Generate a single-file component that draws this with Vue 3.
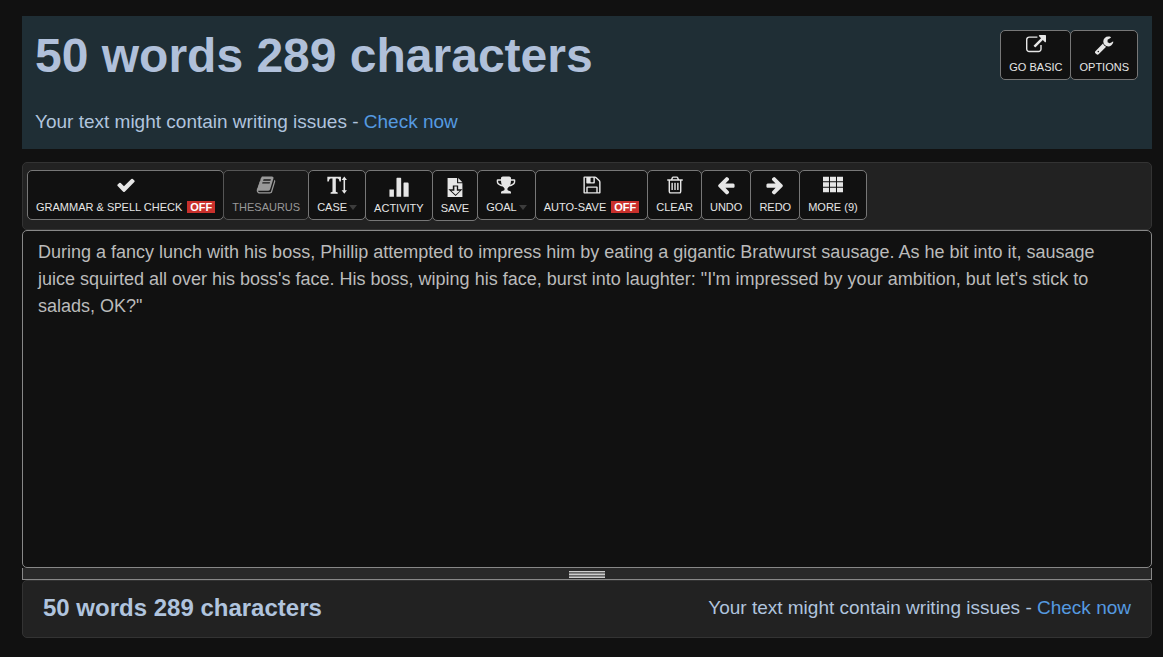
<script setup>
import { ref } from 'vue'

const text = ref(
  'During a fancy lunch with his boss, Phillip attempted to impress him by eating a gigantic Bratwurst sausage. As he bit into it, sausage juice squirted all over his boss\'s face. His boss, wiping his face, burst into laughter: "I\'m impressed by your ambition, but let\'s stick to salads, OK?"'
)

const icons = {
  external: 'M1408 928v320q0 119-84.5 203.5t-203.5 84.5h-832q-119 0-203.5-84.5t-84.5-203.5v-832q0-119 84.5-203.5t203.5-84.5h704q14 0 23 9t9 23v64q0 14-9 23t-23 9h-704q-66 0-113 47t-47 113v832q0 66 47 113t113 47h832q66 0 113-47t47-113v-320q0-14 9-23t23-9h64q14 0 23 9t9 23zm384-864v512q0 26-19 45t-45 19-45-19l-176-176-652 652q-10 10-23 10t-23-10l-114-114q-10-10-10-23t10-23l652-652-176-176q-19-19-19-45t19-45 45-19h512q26 0 45 19t19 45z',
  wrench: 'M448 1472q0-26-19-45t-45-19-45 19-19 45 19 45 45 19 45-19 19-45zm644-420l-682 682q-37 37-90 37-52 0-91-37l-106-108q-38-36-38-90 0-53 38-91l681-681q39 98 114.5 173.5t173.5 114.5zm634-435q0 39-23 106-47 134-164.5 217.5t-258.5 83.5q-185 0-316.5-131.5t-131.5-316.5 131.5-316.5 316.5-131.5q58 0 121.5 16.5t107.5 46.5q16 11 16 28t-16 28l-293 169v224l193 107q5-3 79-48.5t135.5-81 70.5-35.5q15 0 23.5 10t8.5 25z',
  check: 'M1671 566q0 40-28 68l-724 724-136 136q-28 28-68 28t-68-28l-136-136-362-362q-28-28-28-68t28-68l136-136q28-28 68-28t68 28l294 295 656-657q28-28 68-28t68 28l136 136q28 28 28 68z',
  book: 'M1703 478q40 57 18 129l-275 906q-19 64-76.5 107.5t-122.5 43.5h-923q-77 0-148.5-53.5t-99.5-131.5q-24-67-2-127 0-4 3-27t4-37q1-8-3-21.5t-3-19.5q2-11 8-21t16.5-23.5 16.5-23.5q23-38 45-91.5t30-91.5q3-10 .5-30t-.5-28q3-11 17-28t17-23q21-36 42-92t25-90q1-9-2.5-32t.5-28q4-13 22-30.5t22-22.5q19-26 42.5-84.5t27.5-96.5q1-8-3-25.5t-2-26.5q2-8 9-18t18-23 17-21q8-12 16.5-30.5t15-35 16-36 19.5-32 26.5-23.5 36-11.5 47.5 5.5l-1 3q38-9 51-9h761q74 0 114 56t18 130l-274 906q-36 119-71.5 153.5t-128.5 34.5h-869q-27 0-38 15-11 16-1 43 24 70 144 70h923q29 0 56-15.5t35-41.5l300-987q7-22 5-57 38 15 59 43zm-1064 2q-4 13 2 22.5t20 9.5h608q13 0 25.5-9.5t16.5-22.5l21-64q4-13-2-22.5t-20-9.5h-608q-13 0-25.5 9.5t-16.5 22.5zm-83 256q-4 13 2 22.5t20 9.5h608q13 0 25.5-9.5t16.5-22.5l21-64q4-13-2-22.5t-20-9.5h-608q-13 0-25.5 9.5t-16.5 22.5z',
  // Serif capital with a vertical double arrow
  textHeight: 'M30 150H1250V580H1120Q1090 330 960 310H790V1510L960 1560V1680H320V1560L490 1510V310H330Q200 330 160 580H30ZM1550 130L1790 450H1620V1370H1790L1550 1690L1310 1370H1480V450H1310Z',
  chart: 'M40 1130h400v650h-400zM670 130q0-60 60-60h300q60 0 60 60v1650h-420zM1300 560q0-60 60-60h300q100 0 100 100v1180h-460z',
  // Page with a folded corner and a download arrow
  fileDown: 'M230 90H1080V560H1560V1790H230ZM1180 90L1560 460H1180ZM700 760V1100H300L950 1710L1560 1100H1180V760ZM840 860H1060V1240H1340L950 1600L560 1240H840Z',
  trophy: 'M522 883q-74-162-74-371h-256v96q0 78 94.5 162t235.5 113zm1078-275v-96h-256q0 209-74 371 141-29 235.5-113t94.5-162zm128-128v128q0 71-41.5 143t-112 130-173 97.5-215.5 44.5q-42 54-95 95-38 34-52.5 72.5t-14.5 89.5q0 54 30.5 91t97.5 37q75 0 133.5 45.5t58.5 114.5v64q0 14-9 23t-23 9h-832q-14 0-23-9t-9-23v-64q0-69 58.5-114.5t133.5-45.5q67 0 97.5-37t30.5-91q0-51-14.5-89.5t-52.5-72.5q-53-41-95-95-113-5-215.5-44.5t-173-97.5-112-130-41.5-143v-128q0-40 28-68t68-28h288v-96q0-66 47-113t113-47h576q66 0 113 47t47 113v96h288q40 0 68 28t28 68z',
  floppy: 'M512 1536h768v-384h-768v384zm896 0h128v-896q0-14-10-38.5t-20-34.5l-281-281q-10-10-34-20t-39-10v416q0 40-28 68t-68 28h-576q-40 0-68-28t-28-68v-416h-128v1280h128v-416q0-40 28-68t68-28h832q40 0 68 28t28 68v416zm-384-928v-320q0-13-9.5-22.5t-22.5-9.5h-192q-13 0-22.5 9.5t-9.5 22.5v320q0 13 9.5 22.5t22.5 9.5h192q13 0 22.5-9.5t9.5-22.5zm640 32v928q0 40-28 68t-68 28h-1344q-40 0-68-28t-28-68v-1344q0-40 28-68t68-28h928q40 0 88 20t76 48l280 280q28 28 48 76t20 88z',
  trash: 'M704 736v576q0 14-9 23t-23 9h-64q-14 0-23-9t-9-23v-576q0-14 9-23t23-9h64q14 0 23 9t9 23zm256 0v576q0 14-9 23t-23 9h-64q-14 0-23-9t-9-23v-576q0-14 9-23t23-9h64q14 0 23 9t9 23zm256 0v576q0 14-9 23t-23 9h-64q-14 0-23-9t-9-23v-576q0-14 9-23t23-9h64q14 0 23 9t9 23zm128 724v-948h-896v948q0 22 7 40.5t14.5 27 10.5 8.5h832q3 0 10.5-8.5t14.5-27 7-40.5zm-672-1076h448l-48-117q-7-9-17-11h-317q-10 2-17 11zm928 32v64q0 14-9 23t-23 9h-96v948q0 83-47 143.5t-113 60.5h-832q-66 0-113-58.5t-47-141.5v-952h-96q-14 0-23-9t-9-23v-64q0-14 9-23t23-9h309l70-167q15-37 54-63t79-26h320q40 0 79 26t54 63l70 167h309q14 0 23 9t9 23z',
  arrow: 'M1664 896v128q0 53-32.5 90.5t-84.5 37.5h-704l293 294q38 36 38 90t-38 90l-75 76q-37 37-90 37-52 0-91-37l-651-652q-37-37-37-90 0-52 37-91l651-650q38-38 91-38 52 0 90 38l75 74q38 38 38 91t-38 91l-293 293h704q52 0 84.5 37.5t32.5 90.5z',
  grid: 'M0 160h535v400h-535zM628 160h535v400h-535zM1256 160h535v400h-535zM0 650h535v400h-535zM628 650h535v400h-535zM1256 650h535v400h-535zM0 1140h535v400h-535zM628 1140h535v400h-535zM1256 1140h535v400h-535z'
}

const headerTools = [
  { label: 'GO BASIC', icon: 'external' },
  { label: 'OPTIONS', icon: 'wrench' }
]

const tools = [
  { label: 'GRAMMAR & SPELL CHECK', icon: 'check', off: true },
  { label: 'THESAURUS', icon: 'book', disabled: true },
  { label: 'CASE', icon: 'textHeight', caret: true },
  { label: 'ACTIVITY', icon: 'chart', tall: true },
  { label: 'SAVE', icon: 'fileDown', tall: true },
  { label: 'GOAL', icon: 'trophy', caret: true },
  { label: 'AUTO-SAVE', icon: 'floppy', off: true },
  { label: 'CLEAR', icon: 'trash' },
  { label: 'UNDO', icon: 'arrow' },
  { label: 'REDO', icon: 'arrow', flip: true },
  { label: 'MORE (9)', icon: 'grid' }
]
</script>

<template>
  <main class="page">
    <header class="summary">
      <div class="summary-text">
        <h1>50 words 289 characters</h1>
        <p class="issues">Your text might contain writing issues - <a href="#">Check now</a></p>
      </div>
      <div class="group">
        <button v-for="t in headerTools" :key="t.label" type="button" class="tool">
          <svg class="icon" viewBox="0 0 1792 1792" aria-hidden="true"><path :d="icons[t.icon]" /></svg>
          <span class="label">{{ t.label }}</span>
        </button>
      </div>
    </header>

    <div class="toolbar group">
      <button
        v-for="t in tools"
        :key="t.label"
        type="button"
        class="tool"
        :class="{ tall: t.tall }"
        :disabled="t.disabled"
      >
        <svg class="icon" :class="{ flip: t.flip }" viewBox="0 0 1792 1792" aria-hidden="true">
          <path :d="icons[t.icon]" />
        </svg>
        <span class="label">
          {{ t.label }}<span v-if="t.off" class="off">OFF</span><i v-if="t.caret" class="caret"></i>
        </span>
      </button>
    </div>

    <textarea v-model="text" class="editor" aria-label="Text" spellcheck="false"></textarea>
    <div class="grip"><span class="grip-lines"></span></div>

    <footer class="footer">
      <h2>50 words 289 characters</h2>
      <p class="issues">Your text might contain writing issues - <a href="#">Check now</a></p>
    </footer>
  </main>
</template>

<style>
body {
  background: #111;
}
</style>

<style scoped>
.page {
  box-sizing: border-box;
  min-height: 100vh;
  padding: 16px 11px 19px 22px;
  display: flex;
  flex-direction: column;
  font-family: "Liberation Sans", Arial, sans-serif;
  color: #b0c4de;
}
.summary {
  display: flex;
  justify-content: space-between;
  align-items: flex-start;
  padding: 14px 14px 14px 13px;
  background: #1f2e35;
  margin-bottom: 13px;
}
h1,
h2,
p {
  margin: 0;
}
h1 {
  font-size: 48px;
  line-height: 52px;
  margin-bottom: 26px;
  color: #b0c0da;
}
h2 {
  font-size: 24px;
  line-height: 28px;
  color: #b0c4de;
}
.issues {
  font-size: 19px;
  line-height: 27px;
}
.issues a {
  color: #559ae0;
  text-decoration: none;
}
.group {
  display: flex;
  align-items: flex-start;
}
.tool {
  box-sizing: border-box;
  height: 50px;
  padding: 4px 8px 0;
  display: flex;
  flex-direction: column;
  align-items: center;
  background: #111;
  border: 1px solid #777;
  border-radius: 5px;
  color: #e6e6e6;
  font-family: inherit;
  font-size: 11px;
  cursor: pointer;
}
.tool + .tool {
  margin-left: -1px;
}
.tool:disabled {
  background: #181818;
  border-color: #555;
  color: #999;
}
.tall {
  height: 51px;
  padding-top: 6px;
}
.icon {
  width: 20px;
  height: 20px;
  fill: currentColor;
}
.flip {
  transform: scaleX(-1);
}
.label {
  display: flex;
  align-items: center;
  line-height: 12px;
  margin-top: 6px;
  white-space: nowrap;
}
.tall .label {
  margin-top: 5px;
}
.off {
  margin-left: 5px;
  padding: 0 3px;
  background: #c9302c;
  color: #fff;
  font-weight: bold;
}
.caret {
  margin-left: 2px;
  border: 4px solid transparent;
  border-top: 5px solid #3c3c3c;
  border-bottom: 0;
}
.toolbar {
  padding: 7px 4px 8px;
  background: #222;
  border: 1px solid #333;
  border-radius: 5px;
}
.editor {
  box-sizing: border-box;
  display: block;
  width: 100%;
  flex: 1;
  padding: 8px 15px;
  background: #111;
  border: 1px solid #888;
  border-radius: 5px;
  color: #bbb;
  font-family: inherit;
  font-size: 18px;
  line-height: 27px;
  resize: none;
  outline: none;
}
.grip {
  display: flex;
  justify-content: center;
  align-items: flex-end;
  height: 10px;
  padding-bottom: 1px;
  background: #292929;
  border: 1px solid #888;
  border-top: 0;
}
.grip-lines {
  width: 36px;
  height: 7px;
  background: repeating-linear-gradient(#ccc 0 1px, #666 1px 2px, #888 2px 3px);
}
.footer {
  display: flex;
  justify-content: space-between;
  align-items: flex-start;
  padding: 13px 20px 15px;
  background: #222;
  border: 1px solid #333;
  border-radius: 5px;
}
</style>
